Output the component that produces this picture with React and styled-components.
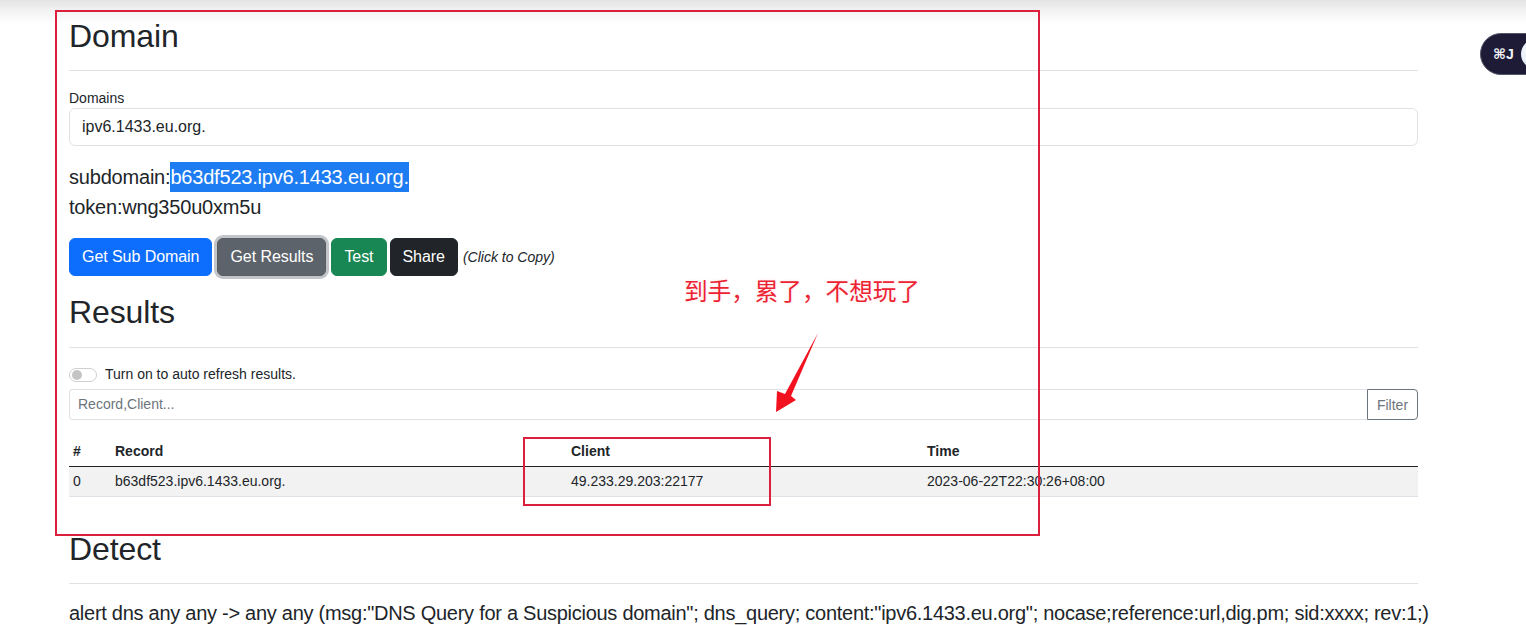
import React from "react";
import styled, { createGlobalStyle, css } from "styled-components";

const GlobalStyle = createGlobalStyle`
  * { box-sizing: border-box; }
  html, body { margin: 0; padding: 0; }
  body {
    font-family: "Liberation Sans", Arial, sans-serif;
    color: #212529;
    background: #fff linear-gradient(to bottom, #e4e4e4 0px, #f4f4f4 12px, #ffffff 24px) no-repeat;
    background-size: 100% 24px;
  }
`;

const Page = styled.div`
  position: relative;
  width: 1526px;
  height: 625px;
  overflow: hidden;
`;

const Container = styled.main`
  width: 1349px;
  margin-left: 69px;
  padding-top: 17px;
`;

const Heading = styled.h2`
  margin: 0;
  font-size: 32px;
  line-height: 38px;
  font-weight: 500;
  letter-spacing: -0.1px;
`;

const Rule = styled.hr`
  margin: ${(p) => p.$top || 15}px 0 0;
  border: 0;
  border-top: 1px solid #e1e1e1;
  height: 0;
`;

const Label = styled.label`
  display: block;
  margin-top: 18px;
  font-size: 14px;
  line-height: 18px;
  margin-bottom: 1px;
`;

const TextInput = styled.div`
  height: 38px;
  border: 1px solid #dee2e6;
  border-radius: 6px;
  padding: 0 12px;
  font-size: 16px;
  line-height: 36px;
  color: #212529;
`;

const InfoBlock = styled.div`
  margin-top: 16px;
`;

const InfoLine = styled.div`
  font-size: 20px;
  line-height: 30px;
  white-space: nowrap;
  letter-spacing: -0.2px;
`;

const Selected = styled.span`
  display: inline-block;
  background: #1d7cf2;
  color: #fff;
`;

const ButtonRow = styled.div`
  margin-top: 16px;
  display: flex;
  align-items: center;
  gap: 3px;
`;

const variants = {
  primary: css`background: #0d6efd; border-color: #0d6efd;`,
  secondary: css`
    background: #5c636a; border-color: #565e64;
    box-shadow: 0 0 0 3px #c2c5c9;
    margin: 0 2px;
  `,
  success: css`background: #198754; border-color: #198754;`,
  dark: css`background: #212529; border-color: #212529;`,
};

const Button = styled.button`
  height: 38px;
  padding: 0 12px;
  border: 1px solid transparent;
  border-radius: 6px;
  color: #fff;
  font-family: inherit;
  font-size: 16px;
  line-height: 36px;
  letter-spacing: -0.06px;
  cursor: pointer;
  ${(p) => variants[p.$variant]}
`;

const CopyHint = styled.i`
  margin-left: 2px;
  font-size: 14px;
`;

const SwitchRow = styled.div`
  margin-top: 16px;
  display: flex;
  align-items: center;
  gap: 8px;
  font-size: 14px;
  line-height: 21px;
`;

const Switch = styled.span`
  position: relative;
  width: 28px;
  height: 14px;
  border: 1px solid #cfcfcf;
  border-radius: 7px;
  background: #fff;
  &::after {
    content: "";
    position: absolute;
    left: 2px;
    top: 1px;
    width: 10px;
    height: 10px;
    border-radius: 50%;
    background: #c4c4c4;
  }
`;

const FilterGroup = styled.div`
  margin-top: 4px;
  display: flex;
  height: 31px;
`;

const FilterInput = styled.div`
  flex: 1;
  border: 1px solid #dee2e6;
  border-right: 0;
  border-radius: 4px 0 0 4px;
  padding: 0 8px;
  font-size: 14px;
  line-height: 29px;
  color: #6c757d;
`;

const FilterButton = styled.button`
  width: 51px;
  border: 1px solid #6c757d;
  border-radius: 0 4px 4px 0;
  background: #fff;
  color: #6c757d;
  font-family: inherit;
  font-size: 14px;
  padding: 0;
`;

const Table = styled.table`
  margin-top: 17px;
  width: 100%;
  border-collapse: collapse;
  table-layout: fixed;
  font-size: 14px;
  line-height: 21px;
`;

const Th = styled.th`
  width: ${(p) => p.$w}px;
  text-align: left;
  font-weight: 700;
  padding: 4px;
  border-bottom: 1px solid #212529;
`;

const Row = styled.tr`
  background: #f2f2f2;
`;

const Td = styled.td`
  padding: 4px;
  border-bottom: 1px solid #dee2e6;
  white-space: nowrap;
`;

const Detect = styled.section`
  margin-top: 33px;
`;

const DetectText = styled.p`
  margin: 15px 0 0;
  font-size: 20px;
  line-height: 28px;
  white-space: nowrap;
  letter-spacing: -0.27px;
`;

/* ---------- annotations / overlays ---------- */

const AnnoBox = styled.div`
  position: absolute;
  border: 2px solid #dc1f3c;
  pointer-events: none;
`;

const AnnoText = styled.div`
  position: absolute;
  left: 684px;
  top: 276px;
  font-family: "Noto Sans CJK SC", "Noto Sans", sans-serif;
  font-size: 23.6px;
  line-height: 28px;
  color: #ec2333;
  text-shadow: 0 0 2px #fff, 0 0 3px #ffd7da;
  white-space: nowrap;
`;

const ArrowSvg = styled.svg`
  position: absolute;
  left: 770px;
  top: 328px;
`;

const Pill = styled.div`
  position: absolute;
  left: 1480px;
  top: 33px;
  width: 80px;
  height: 42px;
  border-radius: 21px;
  background: #1d1b36;
  border: 1px solid #55556a;
  display: flex;
  align-items: center;
  padding-left: 12px;
  gap: 7px;
  color: #f2f2f6;
  font-size: 14px;
  font-weight: 600;
  font-family: "Liberation Sans", "DejaVu Sans", sans-serif;
`;

const PillDot = styled.span`
  width: 30px;
  height: 30px;
  border-radius: 50%;
  background: radial-gradient(circle at 40% 40%, #ffffff 0, #e3ecf6 60%, #c8d7ea 100%);
`;

const columns = [
  { label: "#", w: 42 },
  { label: "Record", w: 456 },
  { label: "Client", w: 356 },
  { label: "Time", w: 495 },
];

const rows = [
  ["0", "b63df523.ipv6.1433.eu.org.", "49.233.29.203:22177", "2023-06-22T22:30:26+08:00"],
];

export default function App() {
  return (
    <Page>
      <GlobalStyle />
      <Container>
        <Heading>Domain</Heading>
        <Rule />
        <Label>Domains</Label>
        <TextInput>ipv6.1433.eu.org.</TextInput>
        <InfoBlock>
          <InfoLine>
            subdomain:<Selected>b63df523.ipv6.1433.eu.org.</Selected>
          </InfoLine>
          <InfoLine>token:wng350u0xm5u</InfoLine>
        </InfoBlock>
        <ButtonRow>
          <Button $variant="primary">Get Sub Domain</Button>
          <Button $variant="secondary">Get Results</Button>
          <Button $variant="success">Test</Button>
          <Button $variant="dark">Share</Button>
          <CopyHint>(Click to Copy)</CopyHint>
        </ButtonRow>

        <Heading style={{ marginTop: 17 }}>Results</Heading>
        <Rule $top={16} />
        <SwitchRow>
          <Switch />
          <span>Turn on to auto refresh results.</span>
        </SwitchRow>
        <FilterGroup>
          <FilterInput>Record,Client...</FilterInput>
          <FilterButton>Filter</FilterButton>
        </FilterGroup>
        <Table>
          <thead>
            <tr>
              {columns.map((c) => (
                <Th key={c.label} $w={c.w}>{c.label}</Th>
              ))}
            </tr>
          </thead>
          <tbody>
            {rows.map((r) => (
              <Row key={r[0]}>
                {r.map((cell, i) => (
                  <Td key={i}>{cell}</Td>
                ))}
              </Row>
            ))}
          </tbody>
        </Table>

        <Detect>
          <Heading>Detect</Heading>
          <Rule />
          <DetectText>
            alert dns any any -&gt; any any (msg:"DNS Query for a Suspicious domain"; dns_query; content:"ipv6.1433.eu.org"; nocase;reference:url,dig.pm; sid:xxxx; rev:1;)
          </DetectText>
        </Detect>
      </Container>

      <AnnoBox style={{ left: 55, top: 10, width: 985, height: 526 }} />
      <AnnoBox style={{ left: 523, top: 437, width: 248, height: 69 }} />
      <AnnoText>到手，累了，不想玩了</AnnoText>
      <ArrowSvg width="54" height="88" viewBox="0 0 54 88">
        <polygon points="48,5 21,68 26,72 6,84 7,63 15,66" fill="#f2121f" />
      </ArrowSvg>
      <Pill>
        <span>⌘J</span>
        <PillDot />
      </Pill>
    </Page>
  );
}
